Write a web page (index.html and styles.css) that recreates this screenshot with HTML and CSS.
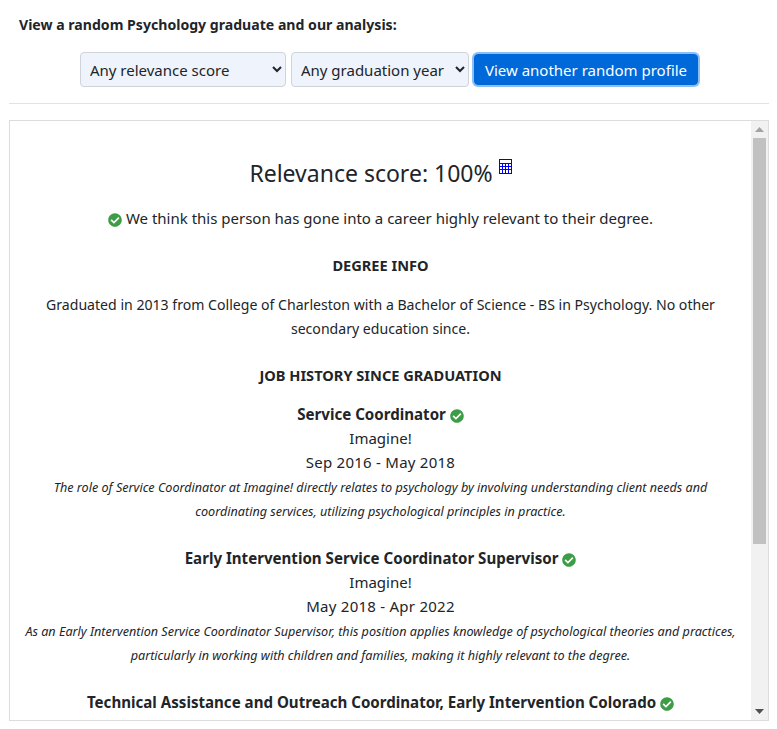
FILE: index.html
```html
<!DOCTYPE html>
<html lang="en">
<head>
<meta charset="utf-8">
<title>Random Psychology graduate</title>
<link rel="stylesheet" href="styles.css">
</head>
<body>
<svg class="defs" width="0" height="0" aria-hidden="true"><defs>
<symbol id="ok" viewBox="0 0 512 512"><path fill="#3d9c46" d="M504 256c0 137-111 248-248 248S8 393 8 256 119 8 256 8s248 111 248 248zM227 387l184-184c6-6 6-16 0-22l-23-23c-6-6-16-6-22 0L216 308l-70-70c-6-6-16-6-22 0l-23 23c-6 6-6 16 0 22l104 104c6 6 16 6 22 0z"/></symbol>
</defs></svg>
<p class="intro">View a random Psychology graduate and our analysis:</p>
<form class="filters">
  <select class="pick pick-score"><option>Any relevance score</option></select>
  <select class="pick pick-year"><option>Any graduation year</option></select>
  <button type="button" class="go">View another random profile</button>
</form>
<hr class="rule">
<section class="box">
  <div class="content">
    <h2 class="score">Relevance score: 100%<a class="calc" href="#" aria-label="Calculation"><svg width="13" height="15" viewBox="0 0 13 15"><path fill="#0000f0" d="M0 0h13v15H0z"/><path fill="#fff" d="M1 1h11v3H1zM1 5h2v2H1zM4 5h2v2H4zM7 5h2v2H7zM10 5h2v2h-2zM1 8h2v2H1zM4 8h2v2H4zM7 8h2v2H7zM10 8h2v2h-2zM1 11h2v3H1zM4 11h2v3H4zM7 11h2v3H7zM10 11h2v3h-2z"/></svg></a></h2>
    <p class="verdict"><svg class="tick"><use href="#ok"/></svg> We think this person has gone into a career highly relevant to their degree.</p>
    <h3 class="head">DEGREE INFO</h3>
    <p class="degree">Graduated in 2013 from College of Charleston with a Bachelor of Science - BS in Psychology. No other secondary education since.</p>
    <h3 class="head head-jobs">JOB HISTORY SINCE GRADUATION</h3>
    <div class="job">
      <div class="title">Service Coordinator <svg class="tick"><use href="#ok"/></svg></div>
      <div>Imagine!</div>
      <div class="dates">Sep 2016 - May 2018</div>
      <div class="why">The role of Service Coordinator at Imagine! directly relates to psychology by involving understanding client needs and coordinating services, utilizing psychological principles in practice.</div>
    </div>
    <div class="job">
      <div class="title">Early Intervention Service Coordinator Supervisor <svg class="tick"><use href="#ok"/></svg></div>
      <div>Imagine!</div>
      <div class="dates">May 2018 - Apr 2022</div>
      <div class="why">As an Early Intervention Service Coordinator Supervisor, this position applies knowledge of psychological theories and practices, particularly in working with children and families, making it highly relevant to the degree.</div>
    </div>
    <div class="job">
      <div class="title">Technical Assistance and Outreach Coordinator, Early Intervention Colorado <svg class="tick"><use href="#ok"/></svg></div>
    </div>
  </div>
  <div class="bar" aria-hidden="true">
    <svg class="arrow" width="17" height="17" viewBox="0 0 17 17"><path fill="#a3a3a3" d="M8.500 6 13 11H4z"/></svg>
    <div class="track"><div class="thumb"></div></div>
    <svg class="arrow" width="17" height="17" viewBox="0 0 17 17"><path fill="#505050" d="M4 6h9l-4.500 5z"/></svg>
  </div>
</section>
</body>
</html>
```
FILE: styles.css
```css
* { box-sizing: border-box; }
html, body { height: 100%; }
body {
  margin: 0;
  padding: 0 8px 8px 9px;
  overflow: hidden;
  background: #fff;
  color: #212529;
  font-family: "Noto Sans", sans-serif;
  font-size: 15px;
  line-height: 24px;
}
.defs { position: absolute; }
.intro {
  margin: 13px 0 15px 10px;
  font-size: 14.1px;
  font-weight: 700;
}
.filters {
  display: flex;
  justify-content: center;
  align-items: center;
  gap: 5px;
  padding-left: 2px;
}
.pick {
  height: 35px;
  padding: 0 4px 0 5px;
  border: 1px solid #ced4da;
  border-radius: 4px;
  background-color: #eff3fb;
  color: #212529;
  font: 15px "Noto Sans", sans-serif;
}
.pick-score { width: 206px; }
.pick-year { width: 178px; }
.go {
  height: 31px;
  padding: 0 10px;
  border: 1px solid #0069d9;
  border-radius: 4px;
  background: #0069d9;
  box-shadow: 0 0 0 2px #8bbff7;
  color: #fff;
  font: 15px "Noto Sans", sans-serif;
  margin: 0 2px 0 0;
}
.rule {
  margin: 16px 0 16px;
  border: 0;
  border-top: 1px solid #e2e2e2;
}
.box {
  display: flex;
  height: 601px;
  border: 1px solid #dcdcdc;
  text-align: center;
}
.content {
  flex: 1;
  min-width: 0;
  overflow: hidden;
  padding: 25px 10px 0;
}
.bar {
  display: flex;
  flex-direction: column;
  flex: none;
  width: 17px;
  background: #f1f1f1;
}
.arrow { display: block; flex: none; }
.track { flex: 1; padding: 0 2px; }
.thumb { height: 406px; background: #c1c1c1; }
.score {
  margin: 13px 0 18px;
  font-size: 23px;
  font-weight: 400;
  line-height: 29px;
}
.calc { display: inline-block; margin-left: 6px; vertical-align: 8px; line-height: 0; }
.verdict { margin: 0 0 23px; }
.tick { width: 14px; height: 14px; vertical-align: -3px; }
.head { margin: 0 0 16px; font-size: 14.6px; font-weight: 700; line-height: 24px; }
.head-jobs { margin-bottom: 15px; }
.degree { margin: 0 0 22px; font-size: 14.1px; }
.job { margin-bottom: 24px; }
.title { font-size: 15.1px; font-weight: 700; }
.dates { letter-spacing: .25px; }
.why { margin: 2px 0 -2px; font-size: 12.6px; font-style: italic; }
```
